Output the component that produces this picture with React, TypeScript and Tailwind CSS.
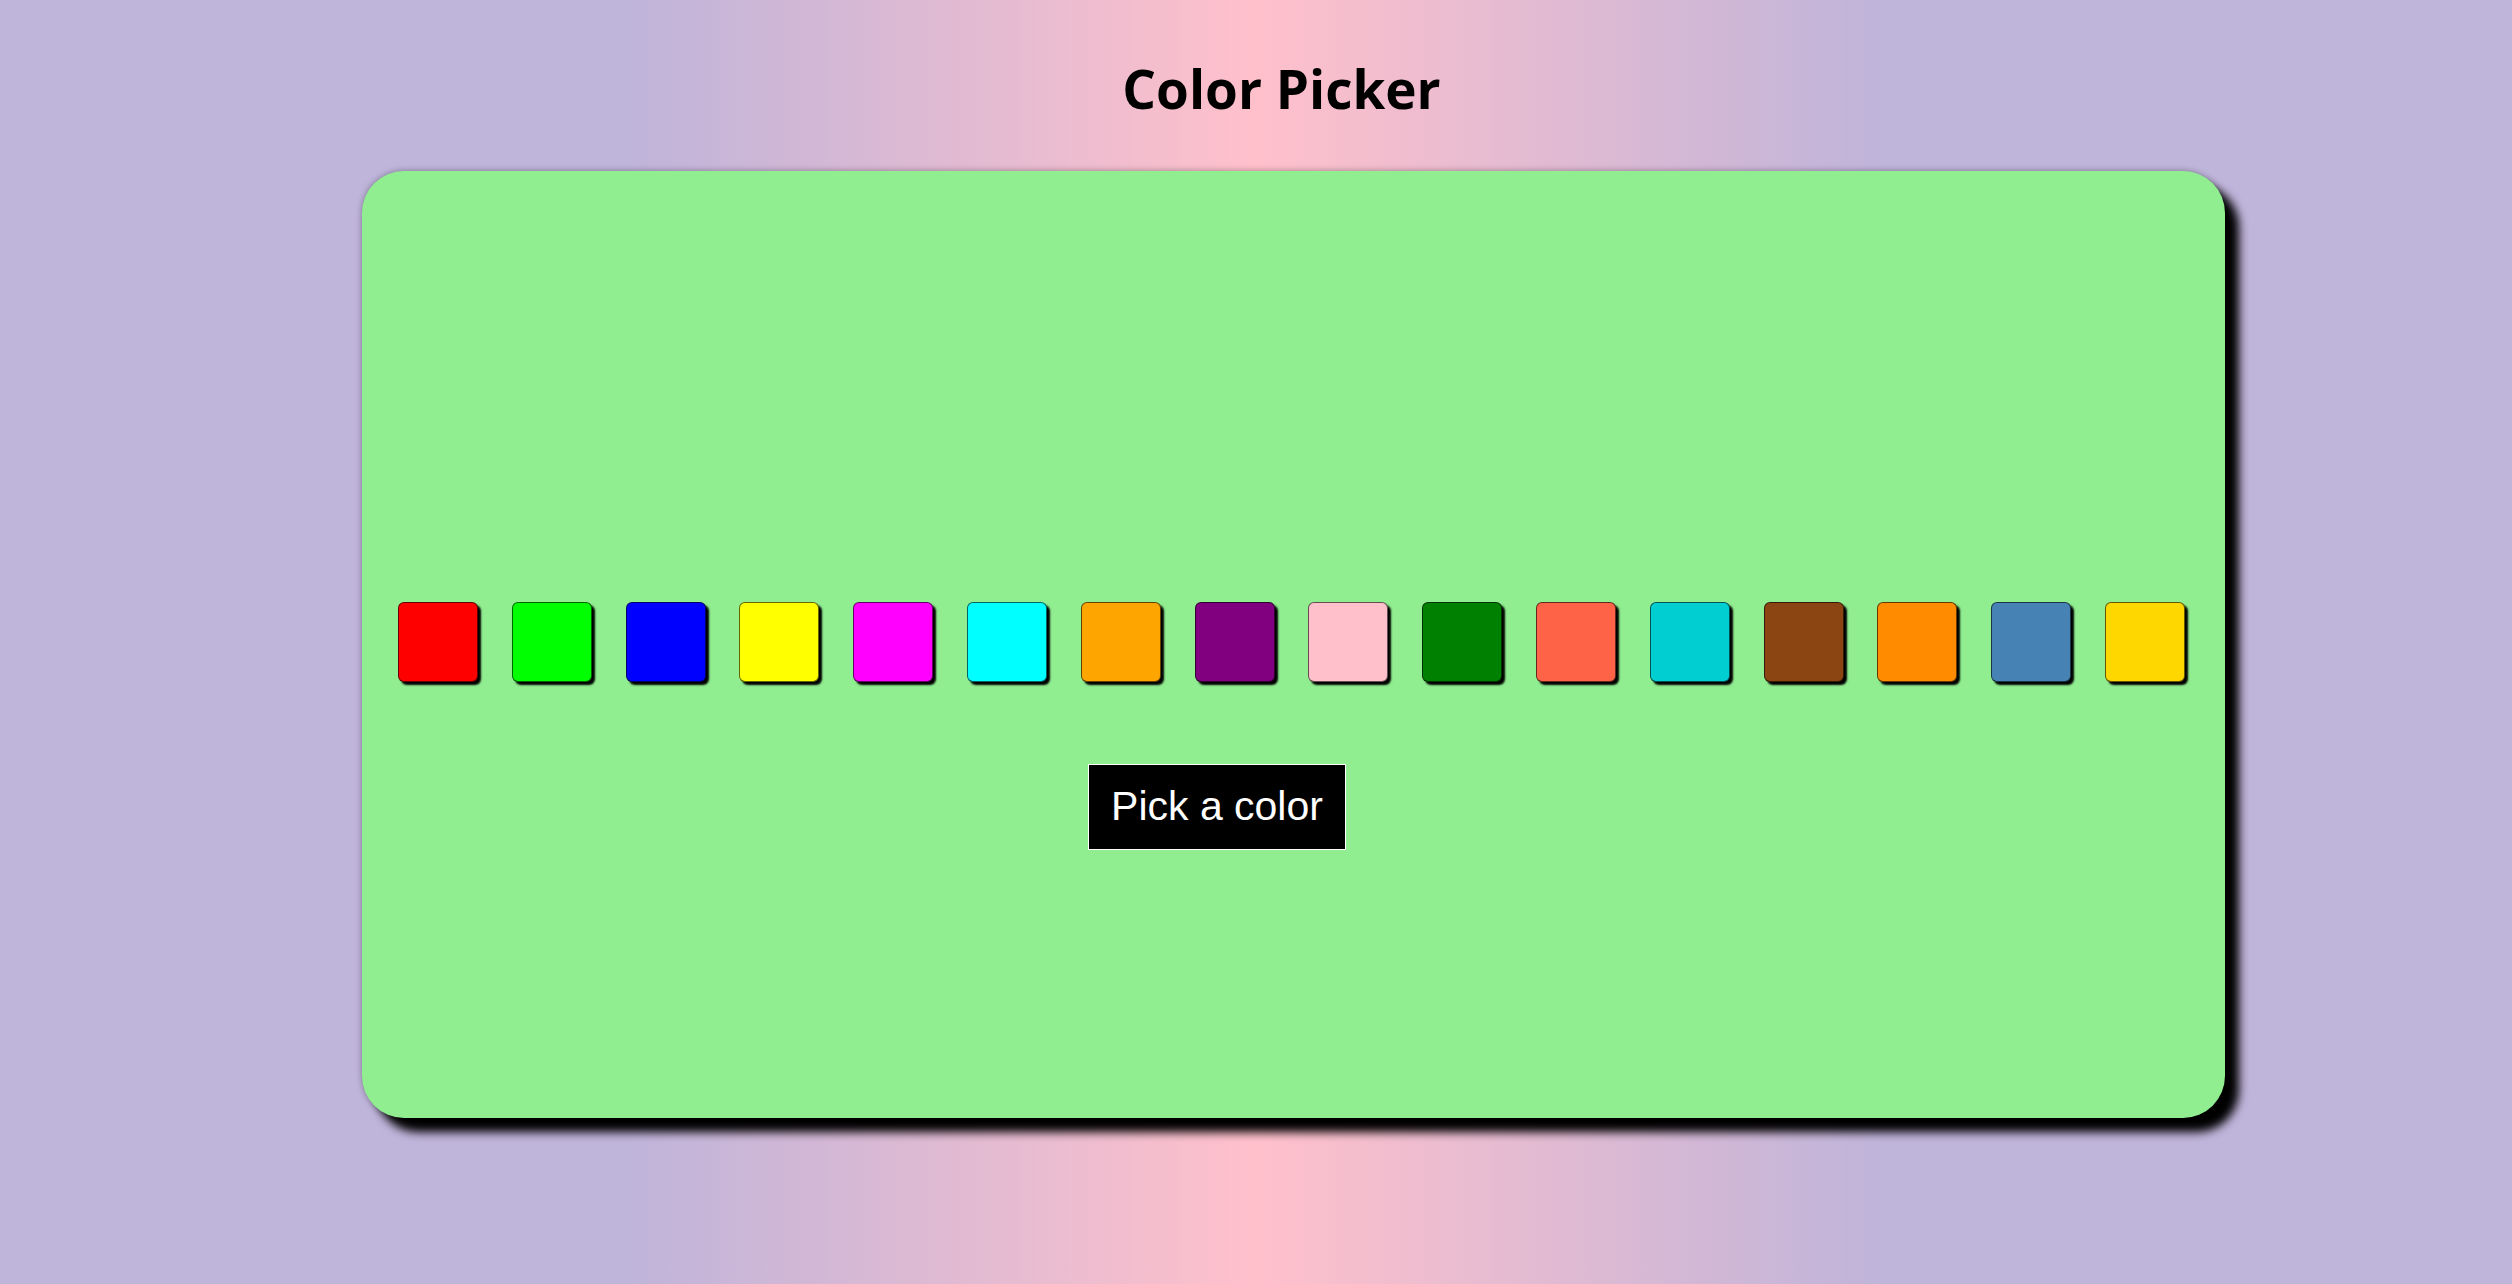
import React from "react";

const colors = [
  "#ff0000", "#00ff00", "#0000ff", "#ffff00", "#ff00ff", "#00ffff", "#ffa500", "#800080",
  "#ffc0cb", "#008000", "#ff6347", "#00ced1", "#8b4513", "#ff8c00", "#4682b4", "#ffd700",
];

export default function App() {
  return (
    <div className="min-h-[1284px] w-full bg-[linear-gradient(to_right,#bfb4da_25%,#ffc0cb_50%,#bfb4da_75%)] flex flex-col items-start pl-[362px]">
      <h1 className="mt-[53px] w-[1863px] pr-[24px] text-center text-[53px] leading-[72px] font-bold text-black font-['Open_Sans',sans-serif]">
        Color Picker
      </h1>
      <div className="mt-[46px] w-[1863px] h-[947px] rounded-[42px] bg-[#90ee90] shadow-[14px_14px_10px_#000,0_0_6px_rgba(0,0,0,0.35)] flex flex-col pt-[431px] px-[36px]">
        <div className="flex gap-[33.8px]">
          {colors.map((c) => (
            <div
              key={c}
              className="w-[80px] h-[80px] rounded-[6px] border border-black/60 shadow-[3px_3px_2px_#000]"
              style={{ backgroundColor: c }}
            />
          ))}
        </div>
        <button className="self-start ml-[690px] mt-[82px] w-[258px] h-[86px] bg-black text-white border border-white text-[41px] font-['Liberation_Sans',Arial,sans-serif] flex items-center justify-center">
          Pick a color
        </button>
      </div>
    </div>
  );
}
